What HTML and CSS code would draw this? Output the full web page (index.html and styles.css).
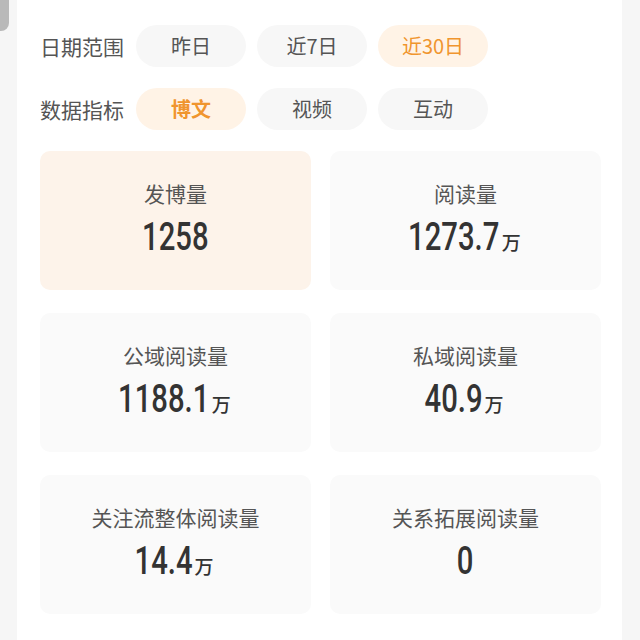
FILE: index.html
```html
<!DOCTYPE html>
<html lang="zh">
<head>
  <meta charset="UTF-8">
  <title>数据概览</title>
  <link rel="stylesheet" href="styles.css">
</head>
<body>
<div class="page">
  <div class="gutter"><div class="tab"></div></div>

  <div class="panel">
    <div class="filter">
      <span class="filter-label">日期范围</span>
      <span class="chip">昨日</span>
      <span class="chip">近7日</span>
      <span class="chip active">近30日</span>
    </div>
    <div class="filter">
      <span class="filter-label">数据指标</span>
      <span class="chip active bold">博文</span>
      <span class="chip">视频</span>
      <span class="chip">互动</span>
    </div>

    <div class="stats">
      <div class="stat active">
        <div class="stat-name">发博量</div>
        <div class="stat-value"><span class="num">1258</span></div>
      </div>
      <div class="stat">
        <div class="stat-name">阅读量</div>
        <div class="stat-value"><span class="num">1273.7<span class="unit">万</span></span></div>
      </div>
      <div class="stat">
        <div class="stat-name">公域阅读量</div>
        <div class="stat-value"><span class="num">1188.1<span class="unit">万</span></span></div>
      </div>
      <div class="stat">
        <div class="stat-name">私域阅读量</div>
        <div class="stat-value"><span class="num">40.9<span class="unit">万</span></span></div>
      </div>
      <div class="stat">
        <div class="stat-name">关注流整体阅读量</div>
        <div class="stat-value"><span class="num">14.4<span class="unit">万</span></span></div>
      </div>
      <div class="stat">
        <div class="stat-name">关系拓展阅读量</div>
        <div class="stat-value"><span class="num">0</span></div>
      </div>
    </div>
  </div>
</div>
</body>
</html>
```

FILE: styles.css
```css
body {
  margin: 0;
  background: #f6f6f6;
  font-family: "Noto Sans CJK SC", "Noto Sans", sans-serif;
  color: #555;
}
.page {
  display: flex;
  height: 640px;
  overflow: hidden;
}
.gutter {
  width: 17px;
  flex-shrink: 0;
}
.tab {
  width: 9px;
  height: 31px;
  background: #b9b9b9;
  border-bottom-right-radius: 8px;
}
.panel {
  width: 605px;
  background: #fff;
  padding: 25px 21px 0 23px;
  box-sizing: border-box;
}
.filter {
  display: flex;
  align-items: center;
  gap: 11px;
  height: 42px;
  margin-bottom: 21px;
}
.filter-label {
  width: 85px;
  font-size: 21px;
  color: #555;
  white-space: nowrap;
}
.chip {
  width: 110px;
  height: 42px;
  line-height: 42px;
  border-radius: 21px;
  background: #f7f7f7;
  text-align: center;
  font-size: 20px;
  color: #555;
}
.chip.active {
  background: #fff3e6;
  color: #f0952e;
}
.chip.bold {
  font-weight: bold;
}
.stats {
  display: grid;
  grid-template-columns: 271px 271px;
  column-gap: 19px;
  row-gap: 23px;
  margin-top: 2px;
}
.stat {
  height: 139px;
  border-radius: 10px;
  background: #fafafa;
  text-align: center;
  padding-top: 28px;
  box-sizing: border-box;
}
.stat.active {
  background: #fdf3ea;
}
.stat-name {
  font-size: 21px;
  line-height: 28px;
  color: #555;
}
.stat-value {
  margin-top: 8px;
  line-height: 44px;
  color: #333;
  white-space: nowrap;
}
/* narrow digits: squeeze the whole value, then widen the unit back */
.num {
  display: inline-block;
  font-family: Roboto, sans-serif;
  font-size: 39px;
  font-weight: 500;
  transform: scaleX(0.75);
}
.unit {
  display: inline-block;
  width: 28px;
  margin-left: 3px;
  text-align: left;
  font-family: "Noto Sans CJK SC", sans-serif;
  font-size: 19px;
  font-weight: 500;
  transform: scaleX(1.333);
  transform-origin: left center;
}
```
